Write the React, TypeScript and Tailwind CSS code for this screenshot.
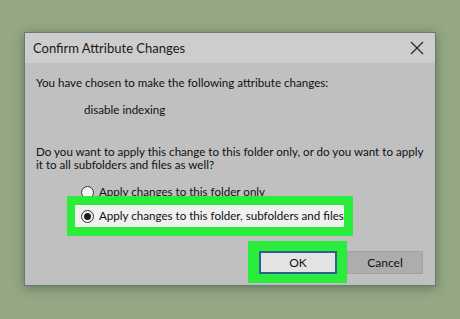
import React from 'react';

const Radio = ({ checked }: { checked?: boolean }) => (
  <span className="flex h-[13px] w-[13px] shrink-0 items-center justify-center rounded-full border border-[#333] bg-[#f4f4f4]">
    {checked && <span className="h-[7px] w-[7px] rounded-full bg-[#1c1c1c]" />}
  </span>
);

const App = () => {
  return (
    <div
      className="h-[319px] w-[460px] overflow-hidden bg-[#94a886] pl-[24px] pt-[32px] text-[#111]"
      style={{ fontFamily: 'Lato, "Noto Sans", sans-serif' }}
    >
      {/* Dialog */}
      <div className="flex h-[254px] w-[412px] flex-col border border-[#667884] bg-[#c0c0c0] shadow-[0_2px_10px_rgba(40,60,30,0.45)]">
        {/* Title bar */}
        <div className="flex h-[30px] shrink-0 items-center justify-between bg-[#cdcdcd] pl-[8px] pr-[11px]">
          <span className="text-[13px] leading-none text-[#1a1a1a]">Confirm Attribute Changes</span>
          <svg width="14" height="14" viewBox="0 0 14 14" className="text-[#222]">
            <path d="M1 1 L13 13 M13 1 L1 13" stroke="currentColor" strokeWidth="1.1" />
          </svg>
        </div>

        {/* Body */}
        <div className="flex flex-col pl-[11px] pt-[12px] text-[11.6px]">
          <p className="leading-[16px]">You have chosen to make the following attribute changes:</p>
          <p className="ml-[48px] mt-[11px] leading-[16px]">disable indexing</p>
          <p className="mt-[27px] whitespace-nowrap leading-[13px]">
            Do you want to apply this change to this folder only, or do you want to apply
            <br />
            it to all subfolders and files as well?
          </p>

          <div className="ml-[45px] mt-[14px] flex h-[14px] items-center gap-[5px] leading-[14px]">
            <Radio />
            <span>Apply changes to this folder only</span>
          </div>

          {/* Highlighted option */}
          <div className="-mt-[3px] ml-[31px] w-[286px] bg-[#2aec3b] pb-[9px] pl-[8px] pr-[9px] pt-[9px]">
            <div className="flex h-[22px] items-center gap-[5px] bg-[#f0f0f0] pl-[6px]">
              <Radio checked />
              <span className="whitespace-nowrap">Apply changes to this folder, subfolders and files</span>
            </div>
          </div>

          {/* Buttons */}
          <div className="mt-[5px] flex items-start justify-end pr-[12px]">
            <div className="bg-[#2aec3b] pb-[9px] pl-[11px] pr-[10px] pt-[10px]">
              <button className="h-[23px] w-[78px] border-2 border-[#2d5f96] bg-[#e3e3e3] text-[12px] text-[#111]">
                OK
              </button>
            </div>
            <button className="mt-[10px] h-[23px] w-[76px] border border-[#a2a2a2] bg-[#adadad] text-[12px] text-[#111]">
              Cancel
            </button>
          </div>
        </div>
      </div>
    </div>
  );
};

export default App;
